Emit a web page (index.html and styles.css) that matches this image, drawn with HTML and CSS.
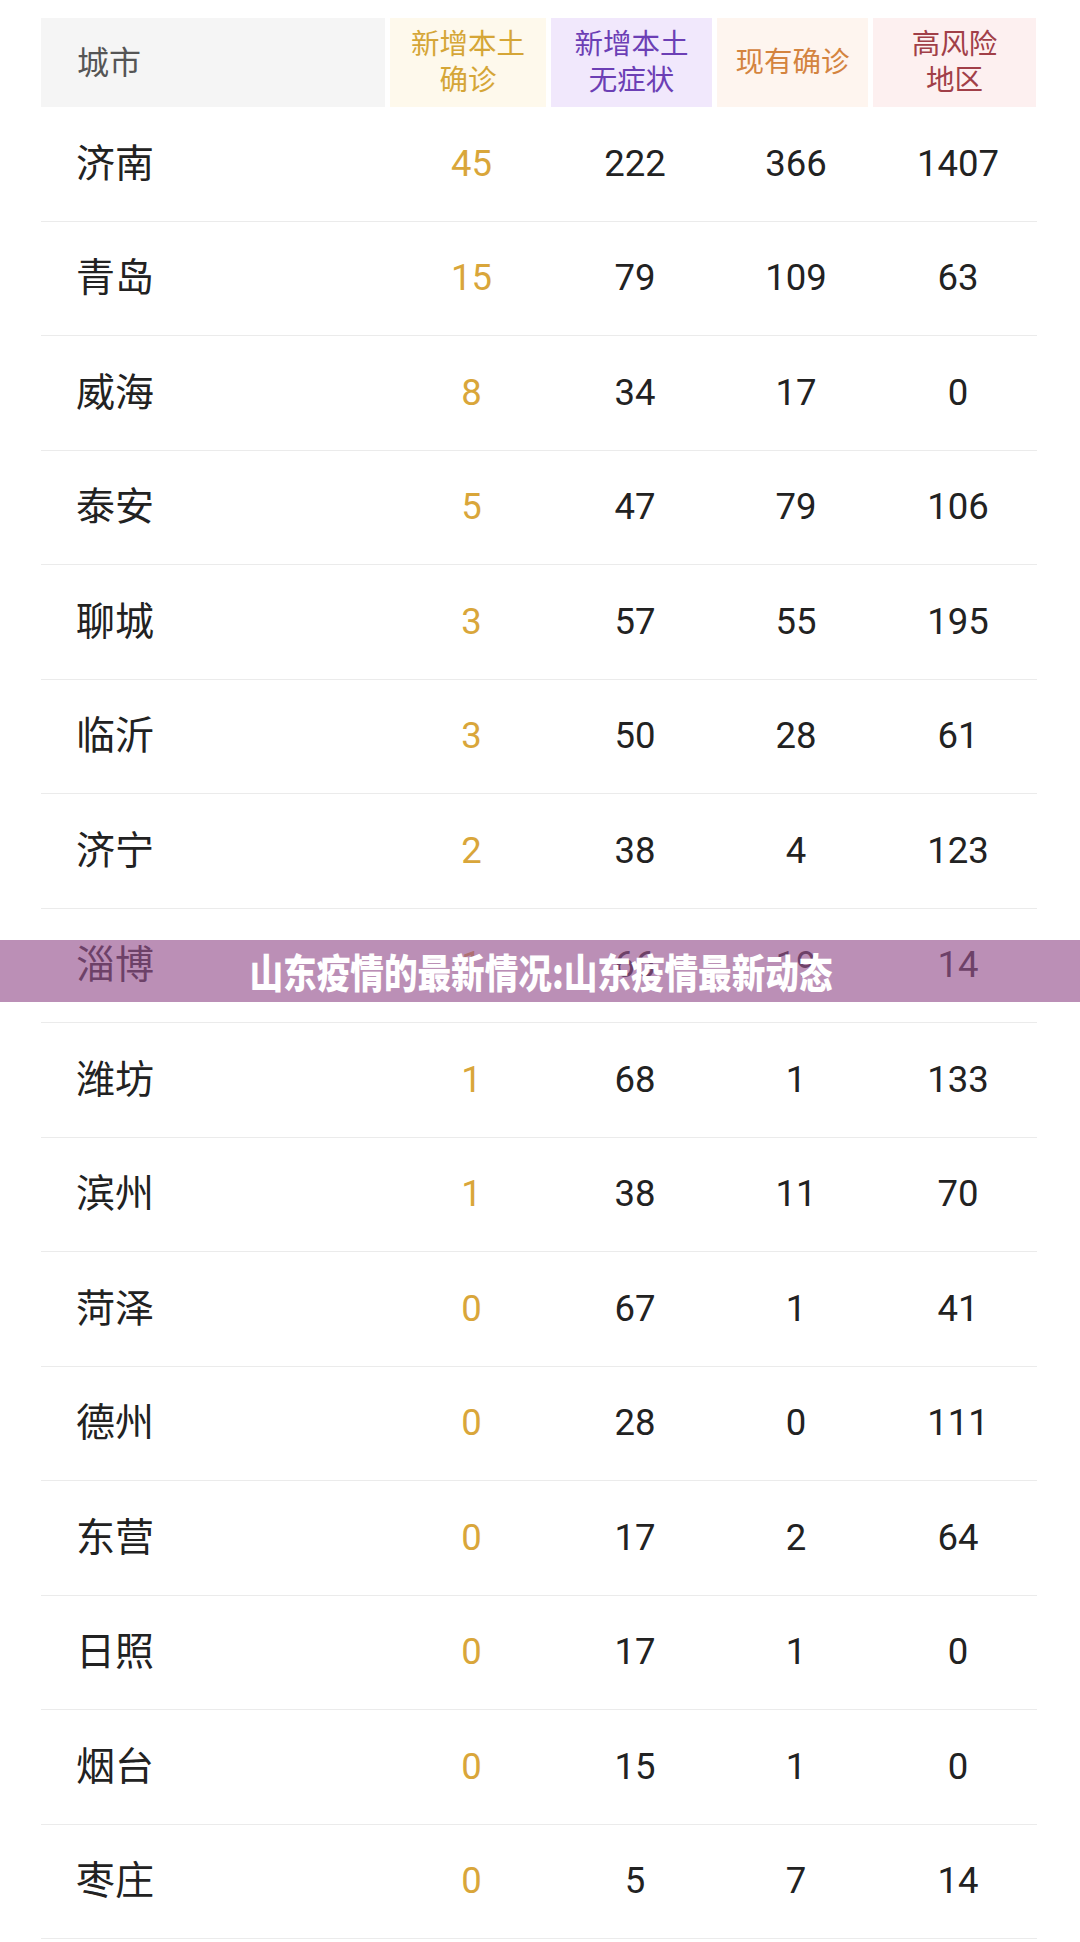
FILE: index.html
```html
<!DOCTYPE html>
<html lang="zh-CN">
<head>
<meta charset="utf-8">
<title>山东疫情的最新情况</title>
<link rel="stylesheet" href="styles.css">
</head>
<body>
<div class="page">
  <div class="table">
    <div class="row head">
      <div class="hc h-city">城市</div>
      <div class="hc h-new">新增本土<br>确诊</div>
      <div class="hc h-asym">新增本土<br>无症状</div>
      <div class="hc h-cur">现有确诊</div>
      <div class="hc h-risk">高风险<br>地区</div>
    </div>
    <div class="row"><div class="city">济南</div><div class="num gold">45</div><div class="num">222</div><div class="num">366</div><div class="num">1407</div></div>
    <div class="row"><div class="city">青岛</div><div class="num gold">15</div><div class="num">79</div><div class="num">109</div><div class="num">63</div></div>
    <div class="row"><div class="city">威海</div><div class="num gold">8</div><div class="num">34</div><div class="num">17</div><div class="num">0</div></div>
    <div class="row"><div class="city">泰安</div><div class="num gold">5</div><div class="num">47</div><div class="num">79</div><div class="num">106</div></div>
    <div class="row"><div class="city">聊城</div><div class="num gold">3</div><div class="num">57</div><div class="num">55</div><div class="num">195</div></div>
    <div class="row"><div class="city">临沂</div><div class="num gold">3</div><div class="num">50</div><div class="num">28</div><div class="num">61</div></div>
    <div class="row"><div class="city">济宁</div><div class="num gold">2</div><div class="num">38</div><div class="num">4</div><div class="num">123</div></div>
    <div class="row"><div class="city">淄博</div><div class="num gold">1</div><div class="num">66</div><div class="num">19</div><div class="num">14</div></div>
    <div class="row"><div class="city">潍坊</div><div class="num gold">1</div><div class="num">68</div><div class="num">1</div><div class="num">133</div></div>
    <div class="row"><div class="city">滨州</div><div class="num gold">1</div><div class="num">38</div><div class="num">11</div><div class="num">70</div></div>
    <div class="row"><div class="city">菏泽</div><div class="num gold">0</div><div class="num">67</div><div class="num">1</div><div class="num">41</div></div>
    <div class="row"><div class="city">德州</div><div class="num gold">0</div><div class="num">28</div><div class="num">0</div><div class="num">111</div></div>
    <div class="row"><div class="city">东营</div><div class="num gold">0</div><div class="num">17</div><div class="num">2</div><div class="num">64</div></div>
    <div class="row"><div class="city">日照</div><div class="num gold">0</div><div class="num">17</div><div class="num">1</div><div class="num">0</div></div>
    <div class="row"><div class="city">烟台</div><div class="num gold">0</div><div class="num">15</div><div class="num">1</div><div class="num">0</div></div>
    <div class="row"><div class="city">枣庄</div><div class="num gold">0</div><div class="num">5</div><div class="num">7</div><div class="num">14</div></div>
  </div>
  <div class="banner"><span class="banner-text">山东疫情的最新情况:山东疫情最新动态</span></div>
</div>
</body>
</html>
```

FILE: styles.css
```css
html, body {
  margin: 0;
  padding: 0;
  background: #ffffff;
}
.page {
  position: relative;
  width: 1080px;
  height: 1942px;
  overflow: hidden;
  font-family: "Noto Sans CJK SC", "Noto Sans", sans-serif;
}
.table {
  margin-left: 41px;
  padding-top: 18px;
  width: 996px;
}
.row {
  display: grid;
  grid-template-columns: 344px 156px 161px 151px 163px;
  column-gap: 5px;
  height: 114.5px;
  box-sizing: border-box;
  border-bottom: 1px solid #ebebeb;
  align-items: center;
}
.row.head {
  height: 89px;
  border-bottom: none;
  align-items: stretch;
}
.hc {
  display: flex;
  align-items: center;
  justify-content: center;
  text-align: center;
  font-size: 28.5px;
  line-height: 36px;
  padding-bottom: 6px;
  box-sizing: border-box;
}
.h-city {
  justify-content: flex-start;
  padding-left: 36px;
  background: #f5f5f5;
  color: #555555;
  font-size: 32px;
}
.h-new {
  background: #fef9ec;
  color: #d5a637;
}
.h-asym {
  background: #f1e8fc;
  color: #6c3fb5;
}
.h-cur {
  background: #fef5ef;
  color: #d4843f;
}
.h-risk {
  background: #fdf0f0;
  color: #a13f48;
}
.city {
  padding-left: 35px;
  padding-bottom: 7px;
  font-size: 39px;
  color: #222222;
  line-height: 1;
}
.num {
  text-align: center;
  padding-left: 7px;
  font-family: Roboto, "Liberation Sans", sans-serif;
  font-size: 36.5px;
  color: #222222;
  line-height: 1;
}
.num.gold {
  color: #d9a63a;
}
.banner {
  position: absolute;
  left: 0;
  top: 940px;
  width: 1080px;
  height: 62px;
  background: rgba(151, 83, 143, 0.65);
  display: flex;
  align-items: center;
  justify-content: center;
}
.banner-text {
  display: inline-block;
  color: #ffffff;
  font-family: "Noto Sans CJK SC", sans-serif;
  font-weight: 900;
  font-size: 40px;
  line-height: 1;
  white-space: nowrap;
  transform: scaleX(0.84);
  margin-left: 3px;
}
```
